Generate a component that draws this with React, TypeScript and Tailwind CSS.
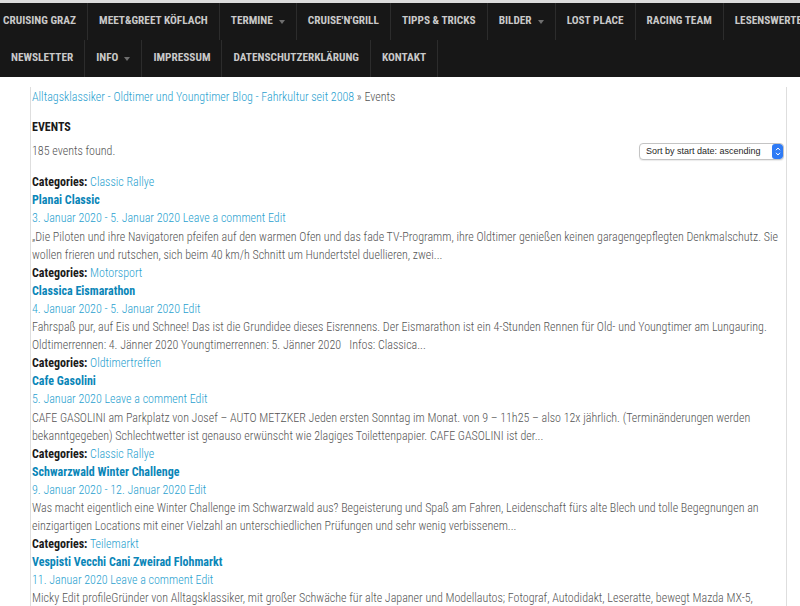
import React from 'react';

type NavItem = { label: string; caret?: boolean };

const topRow: NavItem[] = [
  { label: 'Cruising Graz' },
  { label: 'Meet&Greet Köflach' },
  { label: 'Termine', caret: true },
  { label: "Cruise'n'Grill" },
  { label: 'Tipps & Tricks' },
  { label: 'Bilder', caret: true },
  { label: 'Lost Place' },
  { label: 'Racing Team' },
  { label: 'Lesenswertes' },
];

const bottomRow: NavItem[] = [
  { label: 'Newsletter' },
  { label: 'Info', caret: true },
  { label: 'Impressum' },
  { label: 'Datenschutzerklärung' },
  { label: 'Kontakt' },
];

type EventEntry = {
  category: string;
  title: string;
  date: string;
  comment?: boolean;
  excerpt: string[];
};

const events: EventEntry[] = [
  {
    category: 'Classic Rallye',
    title: 'Planai Classic',
    date: '3. Januar 2020 - 5. Januar 2020',
    comment: true,
    excerpt: [
      '„Die Piloten und ihre Navigatoren pfeifen auf den warmen Ofen und das fade TV-Programm, ihre Oldtimer genießen keinen garagengepflegten Denkmalschutz. Sie',
      'wollen frieren und rutschen, sich beim 40 km/h Schnitt um Hundertstel duellieren, zwei...',
    ],
  },
  {
    category: 'Motorsport',
    title: 'Classica Eismarathon',
    date: '4. Januar 2020 - 5. Januar 2020',
    excerpt: [
      'Fahrspaß pur, auf Eis und Schnee! Das ist die Grundidee dieses Eisrennens. Der Eismarathon ist ein 4-Stunden Rennen für Old- und Youngtimer am Lungauring.',
      'Oldtimerrennen: 4. Jänner 2020 Youngtimerrennen: 5. Jänner 2020 \u00a0 Infos: Classica...',
    ],
  },
  {
    category: 'Oldtimertreffen',
    title: 'Cafe Gasolini',
    date: '5. Januar 2020',
    comment: true,
    excerpt: [
      'CAFE GASOLINI am Parkplatz von Josef – AUTO METZKER Jeden ersten Sonntag im Monat. von 9 – 11h25 – also 12x jährlich. (Terminänderungen werden',
      'bekanntgegeben) Schlechtwetter ist genauso erwünscht wie 2lagiges Toilettenpapier. CAFE GASOLINI ist der...',
    ],
  },
  {
    category: 'Classic Rallye',
    title: 'Schwarzwald Winter Challenge',
    date: '9. Januar 2020 - 12. Januar 2020',
    excerpt: [
      'Was macht eigentlich eine Winter Challenge im Schwarzwald aus? Begeisterung und Spaß am Fahren, Leidenschaft fürs alte Blech und tolle Begegnungen an',
      'einzigartigen Locations mit einer Vielzahl an unterschiedlichen Prüfungen und sehr wenig verbissenem...',
    ],
  },
  {
    category: 'Teilemarkt',
    title: 'Vespisti Vecchi Cani Zweirad Flohmarkt',
    date: '11. Januar 2020',
    comment: true,
    excerpt: [
      'Micky Edit profileGründer von Alltagsklassiker, mit großer Schwäche für alte Japaner und Modellautos; Fotograf, Autodidakt, Leseratte, bewegt Mazda MX-5,',
    ],
  },
];

function NavRow({ items, first }: { items: NavItem[]; first?: boolean }) {
  return (
    <ul className="flex h-[37px] items-stretch whitespace-nowrap">
      {items.map((item, i) => (
        <li
          key={item.label}
          className={`flex items-center border-r border-[#2c2c2c] pr-[11px] ${
            first && i === 0 ? 'pl-[3px]' : 'pl-[11px]'
          }`}
        >
          <span className="text-[11.3px] font-bold uppercase text-[#c9c9c9]">{item.label}</span>
          {item.caret && (
            <span className="ml-[6px] mt-[1px] h-0 w-0 border-x-[3.5px] border-t-[4px] border-x-transparent border-t-[#6f6f6f]" />
          )}
        </li>
      ))}
    </ul>
  );
}

function SortSelect() {
  return (
    <div className="flex h-[17px] w-[145px] items-stretch overflow-hidden rounded-[4px] border border-[#c4c4c4] bg-white shadow-[0_1px_1px_rgba(0,0,0,0.08)]">
      <span className="flex-1 whitespace-nowrap pl-[6px] text-[9px] leading-[15px] font-normal text-[#1f1f1f] [font-family:'Liberation_Sans',sans-serif] [font-stretch:normal]">
        Sort by start date: ascending
      </span>
      <span className="flex w-[11px] flex-col items-center justify-center gap-[1px] rounded-[3px] bg-[#2f7bf5]">
        <svg width="6" height="4" viewBox="0 0 6 4">
          <path d="M1 3.2 3 1 5 3.2" fill="none" stroke="white" strokeWidth="1" />
        </svg>
        <svg width="6" height="4" viewBox="0 0 6 4">
          <path d="M1 0.8 3 3 5 0.8" fill="none" stroke="white" strokeWidth="1" />
        </svg>
      </span>
    </div>
  );
}

export default function App() {
  return (
    <div className="h-[606px] overflow-hidden bg-white [font-family:Roboto,sans-serif] [font-stretch:condensed]">
      <header className="border-t-[3px] border-[#dcdcdc] bg-[#171717]">
        <NavRow items={topRow} first />
        <NavRow items={bottomRow} />
      </header>

      <main className="ml-[30px] mr-[13px] mt-[10px] min-h-[600px] border-x border-[#dedede] pl-px pr-[2px] text-[12px] leading-[18.1px] font-light text-[#555]">
        <div className="pt-[1px]">
          <a className="text-[#2a9fcf]">Alltagsklassiker - Oldtimer und Youngtimer Blog - Fahrkultur seit 2008</a>
          <span> » Events</span>
        </div>

        <h1 className="mt-[12px] font-bold uppercase text-[#1a1a1a]">Events</h1>

        <div className="mt-[6px] flex items-center justify-between">
          <span>185 events found.</span>
          <SortSelect />
        </div>

        <div className="mt-[13px]">
          {events.map((ev) => (
            <article key={ev.title}>
              <div>
                <span className="font-bold text-[#1a1a1a]">Categories:</span>{' '}
                <a className="text-[#2a9fcf]">{ev.category}</a>
              </div>
              <h2 className="font-bold text-[#0a86b8]">{ev.title}</h2>
              <div className="text-[#2a9fcf]">
                {ev.date}
                {ev.comment && ' Leave a comment'} Edit
              </div>
              {ev.excerpt.map((l) => (
                <p key={l} className="whitespace-pre">
                  {l}
                </p>
              ))}
            </article>
          ))}
        </div>
      </main>
    </div>
  );
}
